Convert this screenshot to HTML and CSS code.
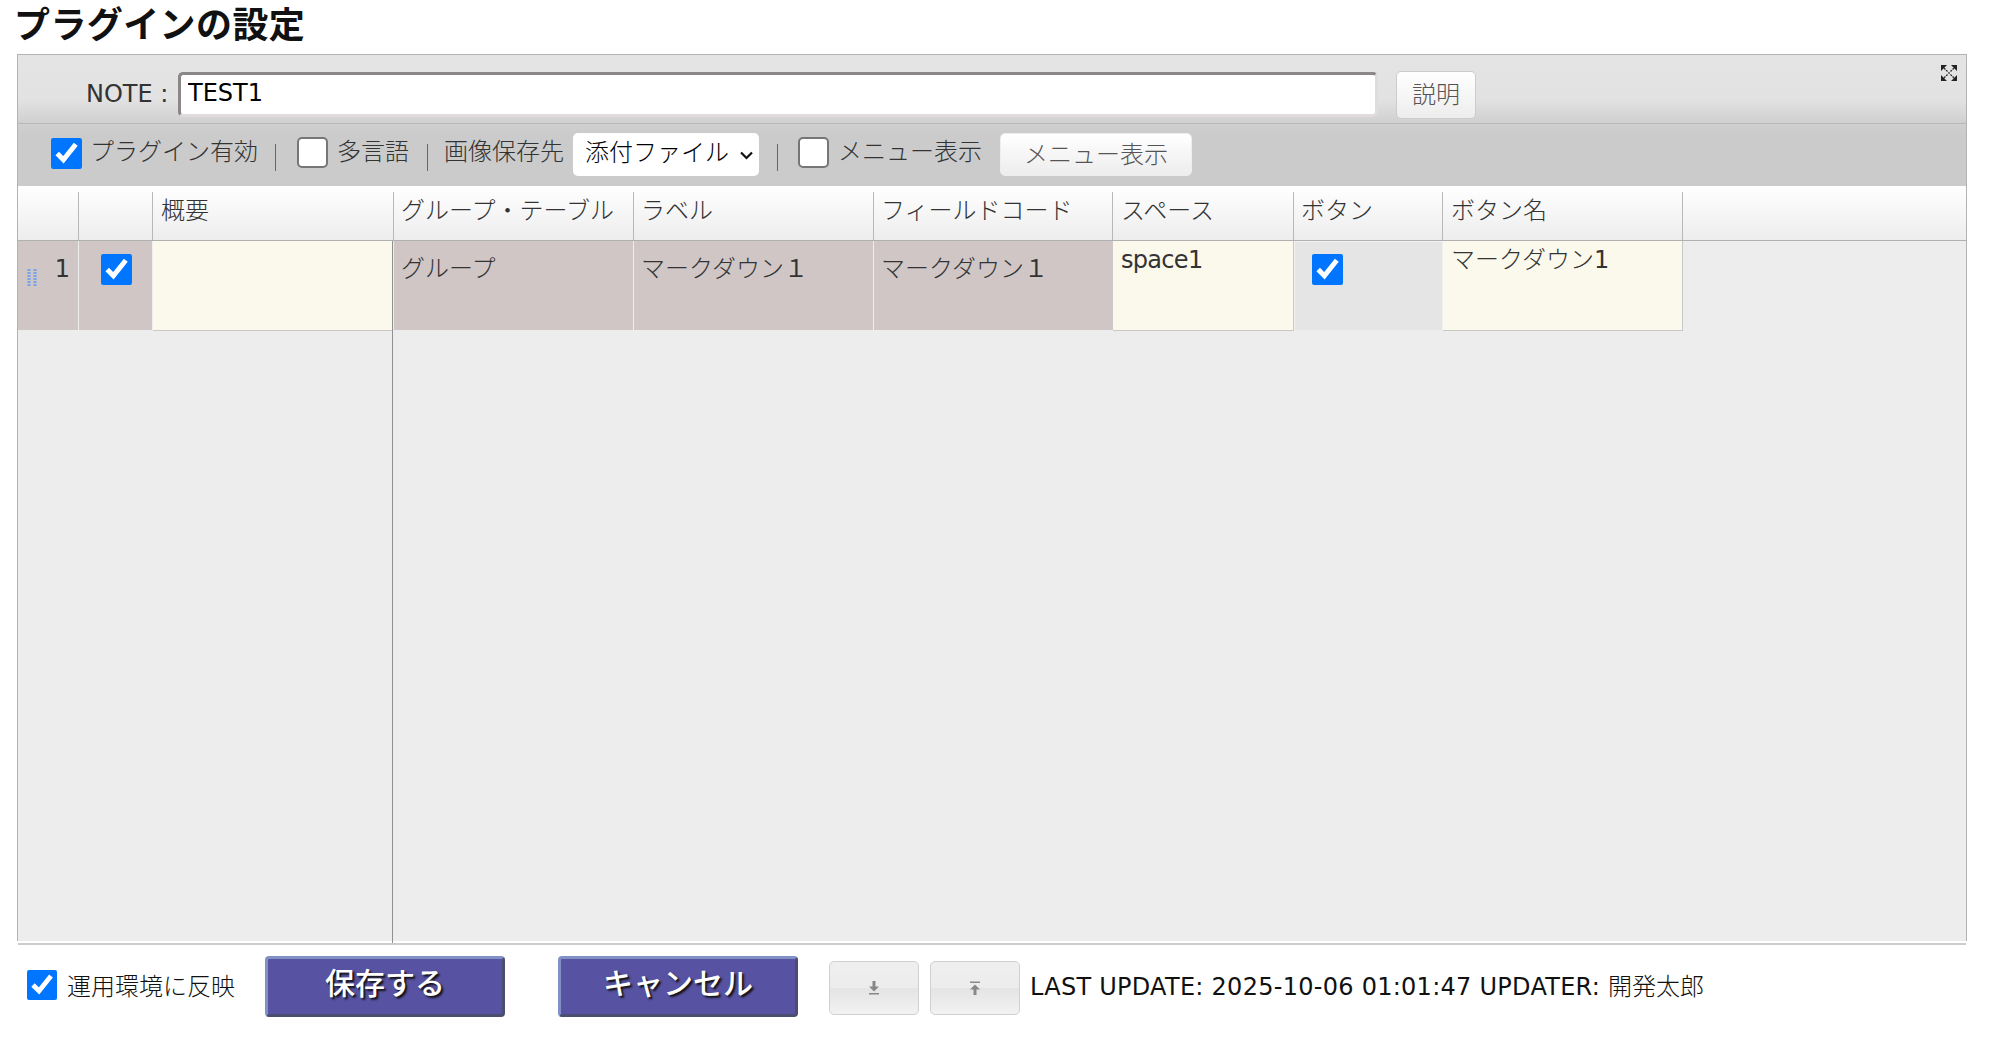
FILE: index.html
```html
<!DOCTYPE html>
<html lang="ja">
  <head>
    <meta charset="UTF-8" />
    <title>プラグインの設定</title>
    <link rel="stylesheet" href="styles.css">
  </head>
  <body>
    <h1>プラグインの設定</h1>

    <div class="panel">
      <!-- NOTE -->
      <div class="note-bar">
        <label class="note-label latin" for="note">NOTE :</label>
        <input class="note-input latin" type="text" id="note" value="TEST1" />
        <button class="btn btn-help">説明</button>
        <svg class="expand" viewBox="0 0 16 16" width="16" height="16">
          <path fill="#222" d="M0 0h6L0 6zM16 0v6L10 0zM0 16v-6l6 6zM16 16h-6l6-6z" />
          <path fill="none" stroke="#333" stroke-width="1.400" stroke-dasharray="2 1" d="M3 3l4 4M13 3L9 7M3 13l4-4M13 13L9 9" />
          <path fill="#777" d="M7 7h2v2H7z" />
        </svg>
      </div>

      <!-- Opciones -->
      <div class="toolbar">
        <input class="check check-low" type="checkbox" id="enabled" checked />
        <label class="label-enabled" for="enabled">プラグイン有効</label>
        <span class="sep"></span>
        <input class="check check-lang" type="checkbox" id="lang" />
        <label class="label-lang" for="lang">多言語</label>
        <span class="sep sep-lang"></span>
        <label class="label-dest" for="dest">画像保存先</label>
        <div class="select" id="dest">
          <span>添付ファイル</span>
          <svg viewBox="0 0 13 9" width="13" height="9">
            <path d="M1 1.500l5.500 5.500L12 1.500" fill="none" stroke="#111" stroke-width="2.200" />
          </svg>
        </div>
        <span class="sep sep-dest"></span>
        <input class="check check-menu" type="checkbox" id="menu" />
        <label class="label-menu" for="menu">メニュー表示</label>
        <button class="btn btn-menu">メニュー表示</button>
      </div>

      <!-- Tabla -->
      <div class="grid grid-head">
        <div class="num"></div>
        <div></div>
        <div class="wide">概要</div>
        <div>グループ・テーブル</div>
        <div>ラベル</div>
        <div>フィールドコード</div>
        <div class="wide">スペース</div>
        <div>ボタン</div>
        <div class="wide">ボタン名</div>
      </div>
      <div class="grid-body">
        <div class="frozen-line"></div>
        <div class="grid grid-row">
          <div class="num locked">
            <svg class="grip" viewBox="0 0 10 18" width="10" height="18">
              <path d="M2 0v18M8 0v18" stroke="#7ba4e6" stroke-width="3.200" stroke-dasharray="2 1" />
            </svg>
            <span class="latin">1</span>
          </div>
          <div class="locked check-cell"><input class="check" type="checkbox" checked /></div>
          <div class="edit edit-frozen"></div>
          <div class="locked">グループ</div>
          <div class="locked">マークダウン<span class="latin">１</span></div>
          <div class="locked last-locked">マークダウン<span class="latin">１</span></div>
          <div class="edit latin space">space1</div>
          <div class="plain check-cell"><input class="check" type="checkbox" checked /></div>
          <div class="edit">マークダウン<span class="latin">1</span></div>
        </div>
      </div>
    </div>
    <div class="rule"></div>

    <!-- Botones inferiores -->
    <div class="footer">
      <input class="check check-apply" type="checkbox" id="apply" checked />
      <label class="label-apply" for="apply">運用環境に反映</label>
      <button class="primary">保存する</button>
      <button class="primary primary-cancel">キャンセル</button>
      <button class="btn btn-icon">
        <svg viewBox="0 0 10 14" width="10" height="14">
          <path fill="#888" d="M3.500 0h3v5.500H10L5 10.500 0 5.500h3.500zM0 12h10v1.500H0z" />
        </svg>
      </button>
      <button class="btn btn-icon btn-up">
        <svg viewBox="0 0 10 14" width="10" height="14">
          <path fill="#888" d="M0 .5h10V2H0zM5 3.500l5 5H6.500V14h-3V8.500H0z" />
        </svg>
      </button>
      <span class="update"><span class="latin">LAST UPDATE: 2025-10-06 01:01:47 UPDATER: </span>開発太郎</span>
    </div>
  </body>
</html>
```
FILE: styles.css
```css
* {
  box-sizing: border-box;
}
body {
  margin: 0;
  padding: 0 0 0 17px;
  width: 1967px;
  background: #fff;
  color: #333;
  font-family: "DejaVu Sans", "Noto Sans CJK JP", sans-serif;
  font-size: 24px;
  font-weight: 300;
  line-height: 36px;
}

h1 {
  margin: 0 0 0 -3px;
  height: 54px;
  padding-top: 2px;
  font-size: 36px;
  line-height: 48px;
  letter-spacing: 0.4px;
  font-weight: bold;
  color: #111;
}

input,
button {
  font: inherit;
  margin: 0;
}

label {
  white-space: nowrap;
}

.latin {
  font-weight: 400;
}

.panel {
  height: 887px;
  border: 1px solid #b3b3b3;
  border-bottom: none;
  display: flex;
  flex-direction: column;
}

/* NOTE */
.note-bar {
  display: flex;
  align-items: flex-start;
  height: 69px;
  padding: 16px 9px 0 68px;
  border-bottom: 1px solid #b8b8b8;
  background: linear-gradient(#e4e4e4, #e2e2e2 65%, #d0d0d0);
}

.note-label {
  width: 92px;
  padding: 5px 0 0 0;
}

.note-input {
  width: 1200px;
  height: 45px;
  margin-top: 1px;
  border: 3px solid;
  border-color: #8b8787 #e0dcdc #e0dcdc #8b8787;
  border-radius: 5px;
  padding: 0 7px 3px;
  background: #fff;
  color: #000;
  outline: none;
}

.btn {
  border: 1px solid #ccc;
  border-radius: 5px;
  padding: 0;
  color: #555;
  background: linear-gradient(#fff, #ededed);
}

.btn-help {
  width: 80px;
  height: 48px;
  margin-left: 18px;
}

.expand {
  margin: -6px 0 0 auto;
}

/* Opciones */
.toolbar {
  display: flex;
  align-items: flex-start;
  height: 62px;
  padding: 9px 0 0 33px;
  background: linear-gradient(#d0d0d0, #cbcbcb 10px);
}

.toolbar label {
  padding-top: 1px;
}

.check {
  flex: none;
  width: 31px;
  height: 31px;
  margin-top: 4px;
}

.check:not(:checked) {
  appearance: none;
  border: 2px solid #767676;
  border-radius: 5px;
  background: #fff;
}

.check-low {
  margin-top: 5px;
}

.sep {
  flex: none;
  width: 1px;
  height: 27px;
  margin-top: 11px;
  background: #666;
}

.label-enabled {
  width: 193px;
  padding-left: 8px;
}

.check-lang {
  margin-left: 21px;
}

.label-lang {
  width: 99px;
  padding-left: 9px;
}

.label-dest {
  width: 145px;
  padding-left: 16px;
}

.select {
  display: flex;
  align-items: center;
  justify-content: space-between;
  width: 186px;
  height: 43px;
  padding: 0 6px 3px 12px;
  border-radius: 5px;
  background: #fff;
  color: #000;
}

.select svg {
  margin-top: 4px;
}

.sep-dest {
  margin-left: 18px;
}

.check-menu {
  margin-left: 20px;
}

.label-menu {
  width: 171px;
  padding-left: 9px;
}

.btn-menu {
  width: 192px;
  height: 43px;
  border-color: #eee;
}

/* Tabla */
.grid {
  display: grid;
  grid-template-columns: 61px 74px 241px 240px 240px 239px 181px 149px 240px;
}

.grid-head {
  height: 55px;
  padding-top: 6px;
  border-bottom: 1px solid #b0b0b0;
  background: linear-gradient(#fff, #ededed);
}

.grid-head div {
  border-right: 1px solid #b8b8b8;
  padding: 1px 0 0 7px;
}

.grid-head .wide {
  padding-left: 8px;
}

.grid-body {
  flex: 1;
  background: #ededed;
  position: relative;
}

/* separa las columnas fijas, pasa por encima de la rejilla */
.frozen-line {
  position: absolute;
  left: 374px;
  top: 0;
  bottom: -2px;
  width: 1px;
  background: #909090;
}

.grid-row {
  height: 90px;
}

.grid-row > div {
  padding-left: 7px;
}

.grid-row .locked {
  height: 89px;
  padding-top: 10px;
  border-right: 1px solid #eee;
  background: #cfc6c5;
}

.grid-row .last-locked {
  border-right: none;
}

.grid-row .num {
  display: flex;
  justify-content: space-between;
  padding-left: 9px;
  padding-right: 8px;
}

.grip {
  margin-top: 18px;
}

.grid-row .edit {
  padding: 1px 0 0 8px;
  border-right: 1px solid #c8c8c8;
  border-bottom: 1px solid #c8c8c8;
  background: #fbf9ec;
}

.grid-row .edit-frozen {
  border-right: 2px solid #ededed;
}

.grid-row .space {
  letter-spacing: -0.7px;
}

.grid-row .plain {
  height: 89px;
  border: 1px solid #f2f2f2;
  border-bottom: none;
  background: #e5e5e5;
}

.grid-row .check-cell {
  padding-left: 22px;
  padding-top: 9px;
}

.grid-row .plain.check-cell {
  padding-left: 17px;
  padding-top: 8px;
}

.rule {
  height: 2px;
  margin: 2px 1px 0 1px;
  background: #ccc;
}

/* Botones inferiores */
.footer {
  display: flex;
  align-items: flex-start;
  padding: 11px 0 0 10px;
  color: #111;
}

.check-apply {
  width: 30px;
  height: 30px;
  margin-top: 14px;
}

.label-apply {
  width: 208px;
  padding: 13px 0 0 10px;
}

.primary {
  width: 240px;
  height: 61px;
  padding: 0 0 6px;
  border: 3px solid;
  border-color: #8191c8 #4a4f70 #4a4f70 #8191c8;
  border-radius: 4px;
  background: #5752a1;
  color: #fff;
  font-size: 30px;
  font-weight: 500;
  text-shadow: 2px 2px 2px #111;
}

.primary-cancel {
  margin-left: 53px;
}

.btn-icon {
  display: flex;
  align-items: center;
  justify-content: center;
  width: 90px;
  height: 54px;
  margin: 5px 0 0 31px;
  border-color: #d0d0d0;
  background: linear-gradient(#efefef, #ececec 50%, #e4e4e4 50%, #f2f2f2);
}

.btn-up {
  margin-left: 11px;
}

.update {
  padding: 13px 0 0 10px;
  white-space: nowrap;
}

.update .latin {
  letter-spacing: 0.27px;
}
```
